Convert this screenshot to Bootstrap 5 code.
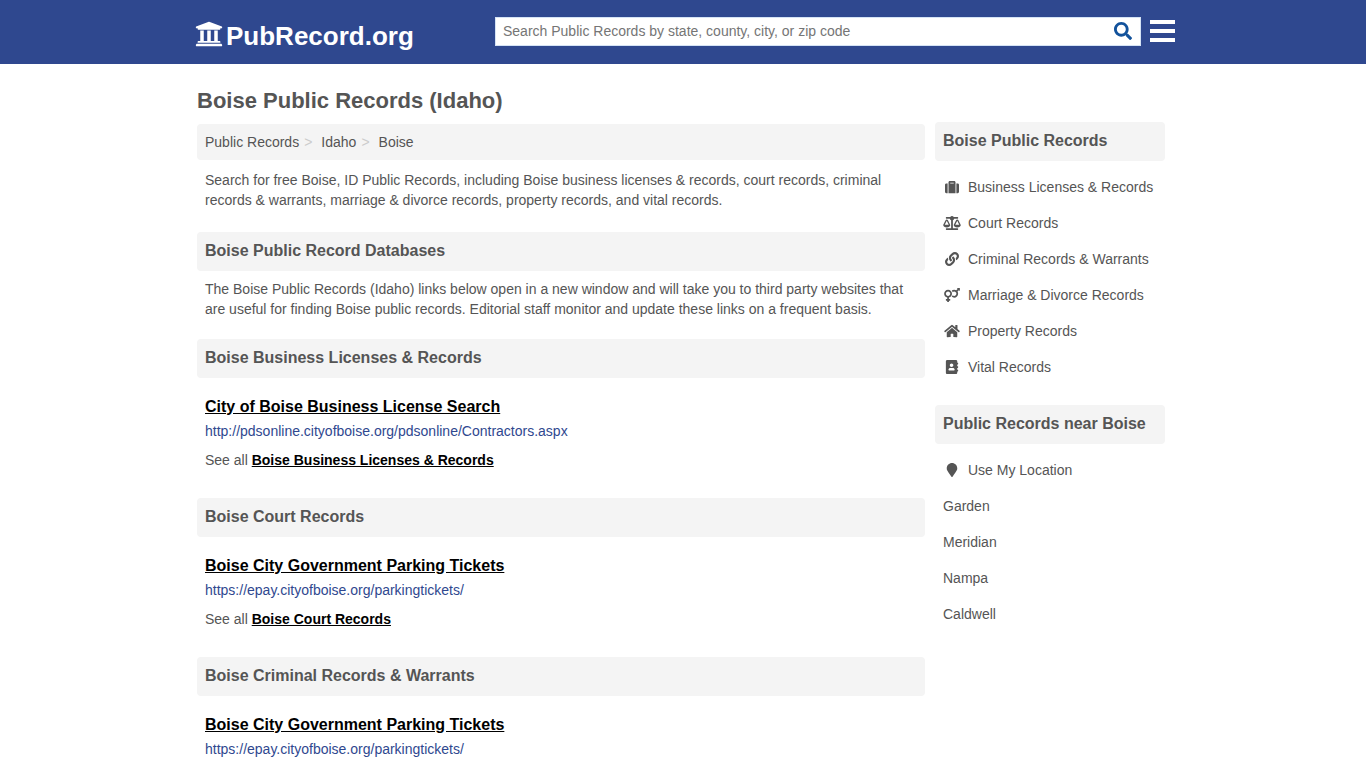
<!DOCTYPE html>
<html lang="en">
<head>
<meta charset="utf-8">
<meta name="viewport" content="width=device-width, initial-scale=1">
<title>Boise Public Records (Idaho)</title>
<link href="https://cdn.jsdelivr.net/npm/bootstrap@5.3.0/dist/css/bootstrap.min.css" rel="stylesheet">
<style>
body { font-family: "Liberation Sans", Arial, sans-serif; font-size: 14px; line-height: 20px; color: #555; }
a { color: inherit; text-decoration: none; }
a:hover { text-decoration: underline; }
svg { fill: currentColor; flex: none; }
.page-wrap { max-width: 980px; }
.head-wrap { max-width: 984px; }
.site-header { background: #2f488f; min-height: 64px; }
.brand-link { font-size: 26px; line-height: 32px; gap: 3px; }
.brand-col { width: 300px; }
.search-box { height: 29px; border: 1px solid #d5e3f5; margin-bottom: 2px; }
.search-box input { font-size: 14px; line-height: 20px; color: #555; padding: 0 7px; min-width: 0; }
.search-box input::placeholder { color: #757575; }
.search-btn { color: #12529b; }
.menu-btn { margin-bottom: 2px; }
.page-title { font-size: 22px; line-height: 26px; }
.bar { background: #f4f4f4; border-radius: 4px; padding: 8px; }
h2.bar { font-size: 16px; line-height: 20px; padding: 9px 8px 10px; font-weight: bold; }
.body-cols { column-gap: 10px; padding-top: 8px; }
.body-cols main { padding-top: 2px; }
.crumbs { --bs-breadcrumb-divider: ">"; --bs-breadcrumb-divider-color: #ccc; --bs-breadcrumb-item-padding-x: 5px; }
.crumbs .breadcrumb-item + .breadcrumb-item::before { padding-right: 9px; }
.intro { padding-top: 10px; margin-bottom: 22px; }
.note { margin-bottom: 20px; }
.record { padding: 19px 8px 0; margin-bottom: 28px; }
.record-title { font-size: 16px; line-height: 20px; color: #000; text-decoration: underline; }
.record-url { color: #2f488f; margin-top: 4px; }
.see-all { margin-top: 9px; }
.see-all a { color: #000; text-decoration: underline; }
.side-col { width: 230px; }
.side-list { margin-bottom: 20px; }
.side-list a { display: flex; align-items: center; gap: 7px; padding: 8px; }
@media (max-width: 767px) { .side-col, .brand-col { width: 100%; } }
</style>
</head>
<body>
<header class="site-header d-flex align-items-center">
  <div class="head-wrap container-fluid ps-1 pe-0 d-flex flex-wrap flex-md-nowrap align-items-center">
    <div class="brand-col flex-shrink-0">
      <a href="#" class="brand-link fw-bold text-white d-inline-flex align-items-start mt-2">
        <svg width="28" height="28" viewBox="0 0 512 512" aria-hidden="true"><path d="M496 128v16a8 8 0 0 1-8 8h-24v12c0 6.627-5.373 12-12 12H60c-6.627 0-12-5.373-12-12v-12H24a8 8 0 0 1-8-8v-16a8 8 0 0 1 4.941-7.392l232-88a7.996 7.996 0 0 1 6.118 0l232 88A8 8 0 0 1 496 128zm-24 304H40c-13.255 0-24 10.745-24 24v16a8 8 0 0 0 8 8h464a8 8 0 0 0 8-8v-16c0-13.255-10.745-24-24-24zM96 192v192H60c-6.627 0-12 5.373-12 12v20h416v-20c0-6.627-5.373-12-12-12h-36V192h-64v192h-64V192h-64v192h-64V192H96z"/></svg>
        <span>PubRecord.org</span>
      </a>
    </div>
    <form class="search-box d-flex flex-grow-1 bg-white">
      <input type="text" class="flex-grow-1 border-0 bg-transparent" placeholder="Search Public Records by state, county, city, or zip code" aria-label="Search public records">
      <button type="button" class="search-btn border-0 bg-transparent d-flex align-items-center px-2 py-0" aria-label="Search"><svg width="18" height="18" viewBox="0 0 512 512"><path d="M505 442.7L405.3 343c-4.5-4.5-10.6-7-17-7H372c27.6-35.3 44-79.7 44-128C416 93.1 322.9 0 208 0S0 93.1 0 208s93.1 208 208 208c48.3 0 92.7-16.4 128-44v16.3c0 6.4 2.5 12.5 7 17l99.7 99.7c9.4 9.4 24.6 9.4 33.9 0l28.3-28.3c9.4-9.4 9.4-24.6.1-34zM208 336c-70.7 0-128-57.2-128-128 0-70.7 57.2-128 128-128 70.7 0 128 57.2 128 128 0 70.7-57.2 128-128 128z"/></svg></button>
    </form>
    <button type="button" class="menu-btn border-0 bg-transparent text-white d-flex p-0 ms-2" aria-label="Menu"><svg width="26" height="24" viewBox="0 0 26 24"><path d="M1 1h25v4H1zM1 10h25v4H1zM1 19h25v4H1z"/></svg></button>
  </div>
</header>

<div class="page-wrap container-fluid ps-1 pe-2">
  <h1 class="page-title fw-bold mb-0 pt-4">Boise Public Records (Idaho)</h1>
  <div class="d-flex flex-wrap flex-md-nowrap body-cols">
    <main class="flex-grow-1">
      <nav aria-label="breadcrumb">
        <ol class="breadcrumb crumbs bar mb-0">
          <li class="breadcrumb-item"><a href="#">Public Records</a></li>
          <li class="breadcrumb-item"><a href="#">Idaho</a></li>
          <li class="breadcrumb-item"><a href="#">Boise</a></li>
        </ol>
      </nav>
      <p class="intro px-2">Search for free Boise, ID Public Records, including Boise business licenses &amp; records, court records, criminal records &amp; warrants, marriage &amp; divorce records, property records, and vital records.</p>
      <h2 class="bar mb-2">Boise Public Record Databases</h2>
      <p class="note px-2">The Boise Public Records (Idaho) links below open in a new window and will take you to third party websites that are useful for finding Boise public records. Editorial staff monitor and update these links on a frequent basis.</p>

      <h2 class="bar mb-0">Boise Business Licenses &amp; Records</h2>
      <div class="record">
        <a href="#" class="record-title fw-bold d-block">City of Boise Business License Search</a>
        <a href="#" class="record-url d-block">http://pdsonline.cityofboise.org/pdsonline/Contractors.aspx</a>
        <div class="see-all">See all <a href="#" class="fw-bold">Boise Business Licenses &amp; Records</a></div>
      </div>

      <h2 class="bar mb-0">Boise Court Records</h2>
      <div class="record">
        <a href="#" class="record-title fw-bold d-block">Boise City Government Parking Tickets</a>
        <a href="#" class="record-url d-block">https://epay.cityofboise.org/parkingtickets/</a>
        <div class="see-all">See all <a href="#" class="fw-bold">Boise Court Records</a></div>
      </div>

      <h2 class="bar mb-0">Boise Criminal Records &amp; Warrants</h2>
      <div class="record mb-0">
        <a href="#" class="record-title fw-bold d-block">Boise City Government Parking Tickets</a>
        <a href="#" class="record-url d-block">https://epay.cityofboise.org/parkingtickets/</a>
      </div>
    </main>

    <aside class="side-col flex-shrink-0">
      <h2 class="bar mb-2">Boise Public Records</h2>
      <ul class="side-list list-unstyled">
        <li><a href="#"><svg width="18" height="14" viewBox="0 0 512 512" aria-hidden="true"><path d="M128 480h256V80c0-26.500-21.500-48-48-48H176c-26.500 0-48 21.500-48 48v400zm64-384h128v32H192V96zm320 80v256c0 26.500-21.500 48-48 48h-48V128h48c26.500 0 48 21.500 48 48zM96 480H48c-26.500 0-48-21.500-48-48V176c0-26.500 21.500-48 48-48h48v352z"/></svg>Business Licenses &amp; Records</a></li>
        <li><a href="#"><svg width="18" height="14" viewBox="0 0 640 512" aria-hidden="true"><path d="M256 336h-.02c0-16.18 1.340-8.730-85.050-181.510-17.650-35.290-68.190-35.360-85.870 0C-2.060 328.750.02 320.330.02 336H0c0 44.180 57.310 80 128 80s128-35.820 128-80zM128 176l72 144H56l72-144zm511.980 160c0-16.180 1.340-8.730-85.050-181.510-17.650-35.290-68.190-35.360-85.870 0-87.120 174.260-85.040 165.840-85.040 181.510H384c0 44.180 57.310 80 128 80s128-35.820 128-80h-.02zM440 320l72-144 72 144H440zm88 128H352V153.250c23.510-10.290 41.160-31.480 46.390-57.250H528c8.840 0 16-7.160 16-16V48c0-8.840-7.160-16-16-16H383.640C369.040 12.680 346.090 0 320 0s-49.040 12.680-63.640 32H112c-8.840 0-16 7.160-16 16v32c0 8.840 7.160 16 16 16h129.610c5.230 25.760 22.870 46.960 46.390 57.250V448H112c-8.840 0-16 7.160-16 16v32c0 8.840 7.160 16 16 16h416c8.840 0 16-7.160 16-16v-32c0-8.840-7.160-16-16-16z"/></svg>Court Records</a></li>
        <li><a href="#"><svg width="18" height="14" viewBox="0 0 512 512" aria-hidden="true"><path d="M326.612 185.391c59.747 59.809 58.927 155.698.36 214.59-.11.12-.24.25-.36.37l-67.2 67.2c-59.27 59.27-155.699 59.262-214.96 0-59.27-59.26-59.27-155.7 0-214.96l37.106-37.106c9.84-9.84 26.786-3.3 27.294 10.606.648 17.722 3.826 35.527 9.69 52.721 1.986 5.822.567 12.262-3.783 16.612l-13.087 13.087c-28.026 28.026-28.905 73.66-1.155 101.96 28.024 28.579 74.086 28.749 102.325.51l67.2-67.19c28.191-28.191 28.073-73.757 0-101.83-3.701-3.694-7.429-6.564-10.341-8.569a16.037 16.037 0 0 1-6.947-12.606c-.396-10.567 3.348-21.456 11.698-29.806l21.054-21.055c5.521-5.521 14.182-6.199 20.584-1.731a152.482 152.482 0 0 1 20.522 17.197zM467.547 44.449c-59.261-59.262-155.69-59.27-214.96 0l-67.2 67.2c-.12.12-.25.25-.36.37-58.566 58.892-59.387 154.781.36 214.59a152.454 152.454 0 0 0 20.521 17.196c6.402 4.468 15.064 3.789 20.584-1.731l21.054-21.055c8.35-8.35 12.094-19.239 11.698-29.806a16.037 16.037 0 0 0-6.947-12.606c-2.912-2.005-6.64-4.875-10.341-8.569-28.073-28.073-28.191-73.639 0-101.83l67.2-67.19c28.239-28.239 74.3-28.069 102.325.51 27.75 28.3 26.872 73.934-1.155 101.96l-13.087 13.087c-4.35 4.35-5.769 10.79-3.783 16.612 5.864 17.194 9.042 34.999 9.69 52.721.509 13.906 17.454 20.446 27.294 10.606l37.106-37.106c59.271-59.259 59.271-155.699.001-214.959z"/></svg>Criminal Records &amp; Warrants</a></li>
        <li><a href="#"><svg width="18" height="14" viewBox="0 0 576 512" aria-hidden="true"><path d="M564 0h-79c-10.7 0-16 12.9-8.5 20.4l16.9 16.9-48.7 48.7C422.5 72.1 396.2 64 368 64c-33.7 0-64.6 11.6-89.2 30.9 14 16.7 25 36 32.1 57.1 14.5-14.8 34.7-24 57.1-24 44.1 0 80 35.9 80 80s-35.9 80-80 80c-22.3 0-42.6-9.2-57.1-24-7.1 21.1-18 40.4-32.1 57.1 24.5 19.4 55.5 30.9 89.2 30.9 79.5 0 144-64.5 144-144 0-28.2-8.1-54.5-22.1-76.7l48.7-48.7 16.9 16.9c2.4 2.4 5.4 3.5 8.4 3.5 6.2 0 12.1-4.8 12.1-12V12c0-6.6-5.4-12-12-12zM144 64C64.5 64 0 128.5 0 208c0 68.5 47.9 125.9 112 140.4V400H76c-6.600 0-12 5.400-12 12v40c0 6.600 5.400 12 12 12h36v36c0 6.600 5.400 12 12 12h40c6.600 0 12-5.400 12-12v-36h36c6.600 0 12-5.400 12-12v-40c0-6.600-5.400-12-12-12h-36v-51.600c64.100-14.600 112-71.900 112-140.400 0-79.500-64.500-144-144-144zm0 224c-44.100 0-80-35.900-80-80s35.900-80 80-80 80 35.900 80 80-35.900 80-80 80z"/></svg>Marriage &amp; Divorce Records</a></li>
        <li><a href="#"><svg width="18" height="14" viewBox="0 0 576 512" aria-hidden="true"><path d="M280.37 148.26L96 300.11V464a16 16 0 0 0 16 16l112.06-.29a16 16 0 0 0 15.92-16V368a16 16 0 0 1 16-16h64a16 16 0 0 1 16 16v95.64a16 16 0 0 0 16 16.05L464 480a16 16 0 0 0 16-16V300L295.67 148.26a12.19 12.19 0 0 0-15.3 0zM571.6 251.47L488 182.56V44.05a12 12 0 0 0-12-12h-56a12 12 0 0 0-12 12v72.61L318.47 43a48 48 0 0 0-61 0L4.34 251.47a12 12 0 0 0-1.6 16.9l25.5 31A12 12 0 0 0 45.15 301l235.22-193.74a12.19 12.19 0 0 1 15.3 0L530.9 301a12 12 0 0 0 16.9-1.6l25.5-31a12 12 0 0 0-1.7-16.93z"/></svg>Property Records</a></li>
        <li><a href="#"><svg width="18" height="14" viewBox="0 0 448 512" aria-hidden="true"><path d="M436 160c6.600 0 12-5.400 12-12v-40c0-6.600-5.400-12-12-12h-20V48c0-26.500-21.500-48-48-48H48C21.500 0 0 21.500 0 48v416c0 26.500 21.500 48 48 48h320c26.500 0 48-21.500 48-48v-48h20c6.600 0 12-5.400 12-12v-40c0-6.600-5.400-12-12-12h-20v-64h20c6.600 0 12-5.400 12-12v-40c0-6.600-5.400-12-12-12h-20v-64h20zm-228-32c35.300 0 64 28.700 64 64s-28.700 64-64 64-64-28.700-64-64 28.700-64 64-64zm112 236.800c0 10.600-10 19.200-22.400 19.200H118.400C106 384 96 375.400 96 364.800v-19.200c0-31.800 30.100-57.600 67.200-57.600h5c12.300 5.100 25.700 8 39.800 8s27.600-2.900 39.800-8h5c37.100 0 67.200 25.800 67.200 57.600v19.200z"/></svg>Vital Records</a></li>
      </ul>
      <h2 class="bar mb-2">Public Records near Boise</h2>
      <ul class="side-list list-unstyled mb-0">
        <li><a href="#"><svg width="18" height="14" viewBox="0 0 384 512" aria-hidden="true"><path d="M172.268 501.670C26.970 291.031 0 269.413 0 192 0 85.961 85.961 0 192 0s192 85.961 192 192c0 77.413-26.970 99.031-172.268 309.670-9.535 13.774-29.930 13.773-39.464 0z"/></svg>Use My Location</a></li>
        <li><a href="#">Garden</a></li>
        <li><a href="#">Meridian</a></li>
        <li><a href="#">Nampa</a></li>
        <li><a href="#">Caldwell</a></li>
      </ul>
    </aside>
  </div>
</div>
<script src="https://cdn.jsdelivr.net/npm/bootstrap@5.3.0/dist/js/bootstrap.bundle.min.js"></script>
</body>
</html>
